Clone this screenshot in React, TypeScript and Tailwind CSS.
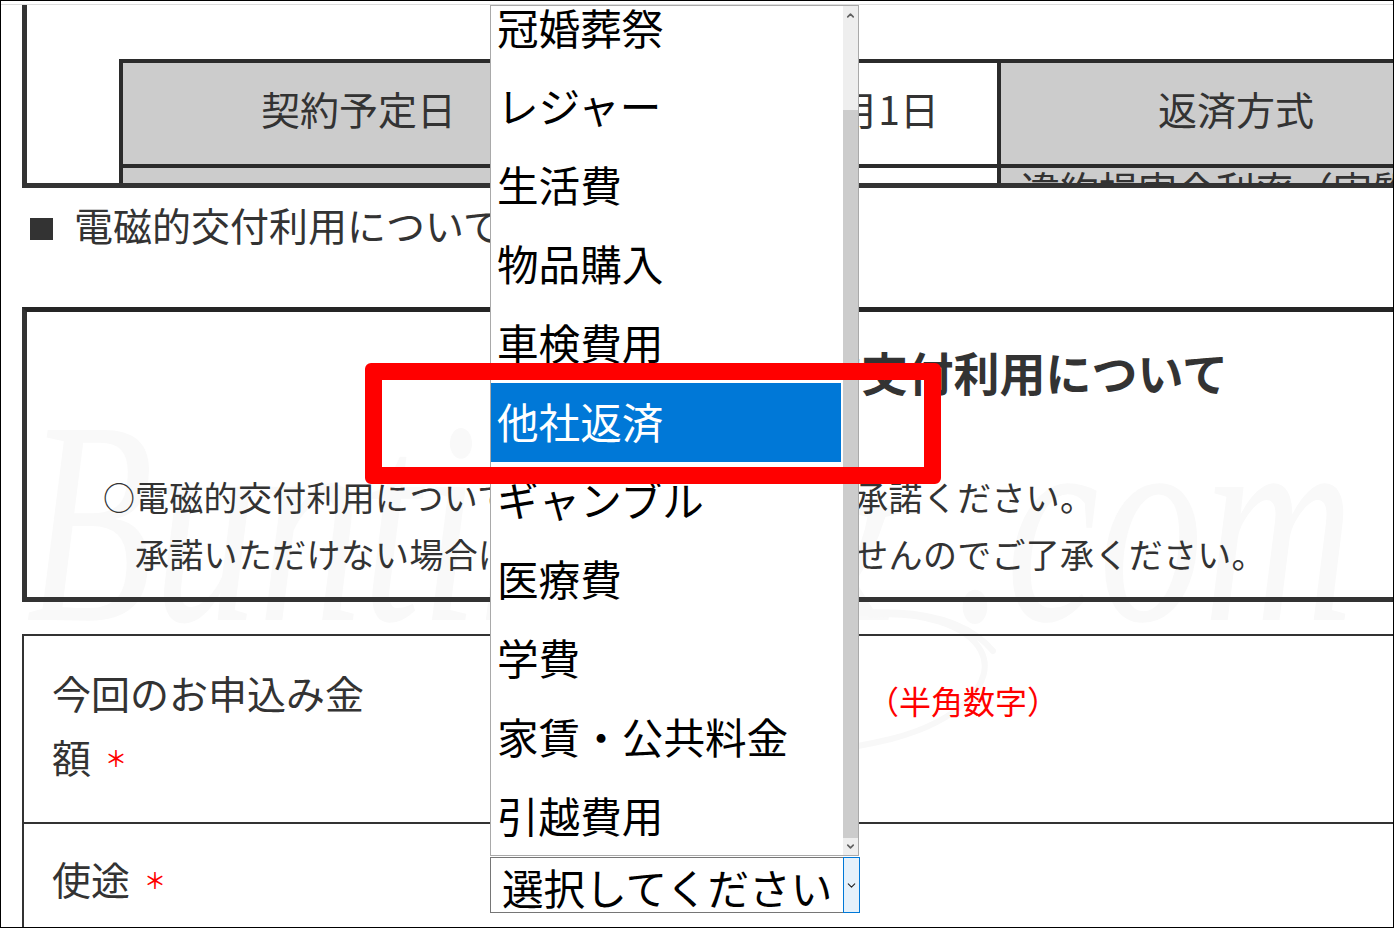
import { ChevronDown, ChevronUp } from 'lucide-react';

const options = ['冠婚葬祭', 'レジャー', '生活費', '物品購入', '車検費用', '他社返済', 'ギャンブル', '医療費', '学費', '家賃・公共料金', '引越費用'];
const selected = '他社返済';

function Dropdown() {
  return (
    <div className="absolute left-[489px] top-[4px] flex h-[851px] w-[369px] border border-[#a9a9a9] bg-white">
      <div className="min-w-0 flex-1 overflow-hidden">
        <div className="-mt-[17px]">
          {options.map(o => (
            <div
              key={o}
              className={`flex h-[78.8px] items-center pb-[2px] pl-[6px] text-[41.6px] leading-none ${o === selected ? 'bg-[#0078d7] text-white' : 'text-black'}`}
            >
              {o}
            </div>
          ))}
        </div>
      </div>
      <div className="ml-[2px] flex w-[15px] flex-col bg-[#eeeeee]">
        <div className="flex h-[18px] items-center justify-center">
          <ChevronUp size={11} strokeWidth={3.5} className="text-[#606060]" />
        </div>
        <div className="mt-[86px] flex-1 bg-[#cccccc]" />
        <div className="flex h-[17px] items-center justify-center">
          <ChevronDown size={11} strokeWidth={3.5} className="text-[#606060]" />
        </div>
      </div>
    </div>
  );
}

function SelectBox() {
  return (
    <div className="absolute left-[489px] top-[856px] flex h-[56px] w-[370px] border border-[#767676] bg-white">
      <div className="flex-1 pl-[11px] text-[41.6px] leading-[58px] text-black">選択してください</div>
      <div className="-m-px flex w-[17px] items-center justify-center border border-[#0078d7] bg-[#e5f1fb]">
        <ChevronDown size={13} strokeWidth={2} className="text-[#222]" />
      </div>
    </div>
  );
}

export default function App() {
  return (
    <div
      className="relative isolate h-[928px] w-[1394px] overflow-hidden border border-black bg-white text-[#333] [font-family:'Noto_Sans_CJK_JP','Noto_Sans',sans-serif]"
    >
      {/* watermark */}
      <div className="absolute left-[25px] top-[372px] -z-10 origin-left scale-x-[0.72] whitespace-nowrap text-[290px] italic leading-[300px] text-[#f9f9f9] [font-family:'Liberation_Serif',serif]">
        Bunting &amp; .com
      </div>
      <svg className="absolute left-[620px] top-[590px] -z-10" width="400" height="190" viewBox="0 0 400 190" fill="none">
        <path
          d="M372 60C330 10 230 14 150 40C80 64 30 110 36 140C44 176 170 172 270 148C340 130 376 90 360 60C346 34 300 20 250 24"
          stroke="#f8f8f8"
          strokeWidth="6"
          strokeLinecap="round"
        />
      </svg>

      <div className="mt-[3px] h-px bg-[#dddddd]" />

      {/* contract summary, scrolled off the top */}
      <div className="ml-[21px] h-[183px] overflow-hidden border-b-5 border-l-5 border-[#333] pl-[92px] pt-[54px]">
        <div className="w-[1400px] border-l-4 border-t-4 border-[#2b2b2b] text-[39px]">
          <div className="flex h-[105px] border-b-4 border-[#2b2b2b]">
            <div className="flex w-[475px] items-center justify-center border-r-4 border-[#2b2b2b] bg-[#cccccc] pb-[10px]">契約予定日</div>
            <div className="flex w-[403px] items-center justify-end border-r-4 border-[#2b2b2b] pb-[10px] pr-[58px]">2021年11月1日</div>
            <div className="flex w-[470px] items-center justify-center bg-[#cccccc] pb-[10px]">返済方式</div>
          </div>
          <div className="flex h-[60px]">
            <div className="w-[475px] border-r-4 border-[#2b2b2b] bg-[#cccccc]" />
            <div className="w-[403px] border-r-4 border-[#2b2b2b]" />
            <div className="w-[470px] whitespace-nowrap bg-[#cccccc] pl-[20px] leading-[40px]">違約損害金利率（実質年率）</div>
          </div>
        </div>
      </div>

      <div className="flex h-[119px] items-start pl-[29px] pt-[12px]">
        <div className="mt-[18px] h-[22px] w-[23px] bg-[#333]" />
        <div className="ml-[21px] whitespace-nowrap text-[39px] leading-[48px]">電磁的交付利用について</div>
      </div>

      {/* consent notice */}
      <div className="ml-[21px] h-[295px] w-[1420px] border-5 border-[#333] border-t-[#252525]">
        <div className="flex w-[1201px] justify-end pt-[29px] text-[46px] font-bold leading-[60px]">電磁的交付利用について</div>
        <div className="mt-[67px] flex whitespace-nowrap pl-[76px] text-[34px] leading-[57px] tracking-[0.3px]">
          <div className="w-[32px] text-[32px]">○</div>
          <div>
            <div>電磁的交付利用について内容をご確認いただき承諾ください。</div>
            <div>承諾いただけない場合は、お申込みいただけませんのでご了承ください。</div>
          </div>
        </div>
      </div>

      {/* application form */}
      <div className="ml-[21px] mt-[32px] border-l-2 border-t-2 border-[#333]">
        <div className="flex h-[188px] border-b-2 border-[#333]">
          <div className="w-[350px] pl-[28px] pt-[24px] text-[39px] leading-[64px]">
            今回のお申込み金額<span className="ml-[14px] align-[7px] text-[22px] font-medium text-[#f00]">＊</span>
          </div>
          <div className="ml-[493px] pt-[39px] text-[32px] leading-[50px] text-[#f00]">（半角数字）</div>
        </div>
        <div className="h-[200px] pl-[28px] pt-[22px] text-[39px] leading-[64px]">
          使途<span className="ml-[14px] align-[7px] text-[22px] font-medium text-[#f00]">＊</span>
        </div>
      </div>

      <Dropdown />
      <SelectBox />

      {/* annotation */}
      <div className="absolute left-[364px] top-[362px] h-[121px] w-[576px] rounded-[6px] border-[17px] border-[#ff0000]" />
    </div>
  );
}
